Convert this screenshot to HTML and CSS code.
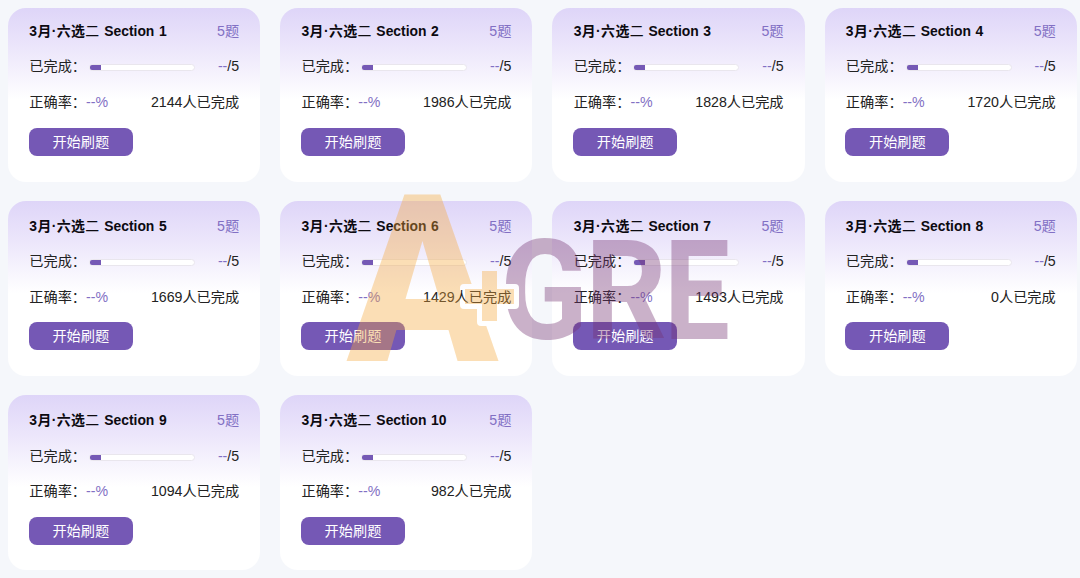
FILE: index.html
```html
<!DOCTYPE html>
<html lang="zh-CN">
<head>
<meta charset="utf-8">
<title>3月·六选二</title>
<link rel="stylesheet" href="styles.css">
</head>
<body>
<main class="grid" id="grid"></main>
<svg class="watermark" viewBox="0 0 400 180" aria-hidden="true">
  <defs>
    <mask id="plus-gap" maskUnits="userSpaceOnUse" x="0" y="0" width="400" height="180">
      <rect width="400" height="180" fill="#fff"/>
      <rect x="120" y="94" width="59" height="25" rx="4" fill="#000"/>
      <rect x="137" y="76" width="25" height="60" rx="4" fill="#000"/>
    </mask>
  </defs>
  <g mask="url(#plus-gap)">
    <text class="mark-a" x="7" y="171" textLength="151" lengthAdjust="spacingAndGlyphs">A</text>
    <text class="mark-gre" x="160" y="149" textLength="88" lengthAdjust="spacingAndGlyphs">G</text>
    <text class="mark-gre" x="245" y="149" textLength="82" lengthAdjust="spacingAndGlyphs">R</text>
    <text class="mark-gre" x="324" y="149" textLength="66" lengthAdjust="spacingAndGlyphs">E</text>
  </g>
  <path class="mark-plus" d="M142 81h15v18h17v15h-17v17h-15v-17h-17V99h17z"/>
</svg>
<script src="cards.js"></script>
</body>
</html>
```

FILE: styles.css
```css
* { box-sizing: border-box; }

body {
  margin: 0;
  width: 1080px;
  height: 578px;
  overflow: hidden;
  background: #f5f7fb;
  color: #222;
  font: 14.2px/20px "Liberation Sans", "Noto Sans CJK SC", sans-serif;
}

.grid {
  display: grid;
  grid-template-columns: repeat(4, 252.2px);
  grid-template-rows: 174px 175px 175px;
  column-gap: 20px;
  row-gap: 19.3px;
  padding: 7.5px 0 0 8px;
}

.card {
  padding: 15px 21px 0 21.3px;
  border-radius: 18px;
  background: linear-gradient(#ded5f8 0, #ece6fb 40px, #fff 92px);
  white-space: nowrap;
}

.card:nth-child(-n+4) { padding-top: 13px; }
.card:nth-child(-n+4) .row:nth-child(3) { margin-bottom: 16px; }

.row {
  display: flex;
  align-items: center;
  justify-content: space-between;
  height: 20px;
  margin-bottom: 15.5px;
}

.title {
  margin: 0;
  color: #0c0a10;
  font-size: 13.9px;
  font-weight: 700;
  word-spacing: .7px;
}

.month { letter-spacing: .4px; }

.thin { font-weight: 400; }

.accent { color: #8270c4; }

.progress {
  display: flex;
  align-items: center;
}

.track {
  width: 106px;
  height: 7px;
  margin: 3px 0 0 3px;
  border: 1px solid #e9e6ed;
  border-radius: 4px;
  background: #fff;
}

.fill {
  width: 11px;
  height: 5px;
  border-radius: 2px 0 0 2px;
  background: #7559b5;
}

.start {
  display: block;
  width: 104px;
  height: 28px;
  margin-left: -.5px;
  padding: 0;
  border: 0;
  border-radius: 8px;
  background: #7558b5;
  color: #fff;
  font: inherit;
  line-height: 28px;
}

.watermark {
  position: absolute;
  left: 340px;
  top: 190px;
  width: 400px;
  height: 180px;
  pointer-events: none;
}

.mark-a,
.mark-gre { font-family: Roboto, sans-serif; font-weight: 700; }

.mark-a {
  font-size: 233px;
  font-weight: 900;
  fill: #f5a83d;
  fill-opacity: .38;
}

.mark-gre {
  font-size: 139px;
  fill: #743271;
  fill-opacity: .38;
}

.mark-plus {
  fill: #f5a83d;
  fill-opacity: .38;
}
```

FILE: cards.js
```javascript
const finished = [2144, 1986, 1828, 1720, 1669, 1429, 1493, 0, 1094, 982];

document.getElementById("grid").innerHTML = finished.map((count, i) => `
  <section class="card">
    <div class="row">
      <h2 class="title"><span class="month">3月·六选<span class="thin">二</span></span> Section ${i + 1}</h2>
      <span class="accent">5题</span>
    </div>
    <div class="row">
      <div class="progress">已完成：<div class="track"><div class="fill"></div></div></div>
      <span><span class="accent">--</span>/5</span>
    </div>
    <div class="row">
      <span>正确率：<span class="accent">--%</span></span>
      <span>${count}人已完成</span>
    </div>
    <button class="start">开始刷题</button>
  </section>`).join("");
```
